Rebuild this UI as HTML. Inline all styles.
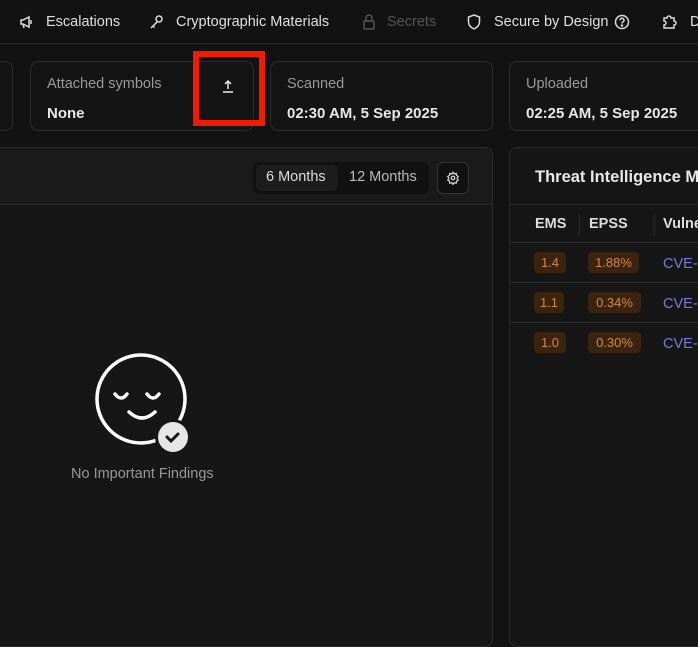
<!DOCTYPE html>
<html><head><style>
*{box-sizing:border-box;margin:0;padding:0}
body{width:698px;height:634px;overflow:hidden;background:#121212;font-family:"Liberation Sans",sans-serif;color:#e6e6e6;position:relative}
.nav{position:absolute;top:0;left:0;width:698px;height:44px;border-bottom:1px solid #2a2a2a}
.nav span{position:absolute;top:14px;font-size:14.5px;color:#e0e0e0;white-space:nowrap}
.nav svg{position:absolute;top:14px}
.card{position:absolute;top:61px;height:70px;border:1px solid #2c2c2c;border-radius:8px;background:#141414}
.card .l{position:absolute;left:16px;top:14px;font-size:14.5px;color:#9a9a9a}
.card .v{position:absolute;left:16px;top:43px;font-size:15px;font-weight:bold;color:#e8e8e8;white-space:nowrap}
.panel{position:absolute;top:147px;height:500px;border:1px solid #2a2a2a;border-radius:8px;background:#161616;overflow:hidden}
.ph{position:absolute;left:0;right:0;top:0;height:57px;background:#1a1a1a;border-bottom:1px solid #2a2a2a}
.badge{position:absolute;height:21px;border-radius:4px;background:#3a2410;color:#d4893a;font-size:13px;line-height:21px;text-align:center}
.cve{position:absolute;left:153px;color:#7b78d8;font-size:14.5px}
.row{position:absolute;left:0;right:0;height:1px;background:#2a2a2a}
</style></head><body>
<div class="nav">
<svg style="left:19px" width="16" height="16" viewBox="0 0 16 16" fill="none" stroke="#ddd" stroke-width="1.5"><path d="M2 6v4h2l6 3V3L4 6z M4 10l1 4"/><path d="M12 6v4"/></svg>
<span style="left:46px">Escalations</span>
<svg style="left:149px" width="16" height="16" viewBox="0 0 16 16" fill="none" stroke="#ddd" stroke-width="1.5"><circle cx="10" cy="5" r="3"/><path d="M8 8l-6 6M4 12l1.5 1.5"/></svg>
<span style="left:176px">Cryptographic Materials</span>
<svg style="left:362px" width="14" height="16" viewBox="0 0 14 16" fill="none" stroke="#555" stroke-width="1.5"><rect x="2" y="7" width="10" height="8" rx="1"/><path d="M4 7V4a3 3 0 0 1 6 0v3"/></svg>
<span style="left:387px;color:#555">Secrets</span>
<svg style="left:467px" width="14" height="16" viewBox="0 0 14 16" fill="none" stroke="#ddd" stroke-width="1.5"><path d="M7 1l5.5 2v5c0 3-2.5 5.5-5.5 7C4 13.5 1.5 11 1.5 8V3z"/></svg>
<span style="left:494px">Secure by Design</span>
<svg style="left:614px" width="16" height="16" viewBox="0 0 16 16" fill="none" stroke="#ddd" stroke-width="1.5"><circle cx="8" cy="8" r="6.5"/><path d="M6 6.2a2 2 0 1 1 2.5 2c-.5.2-.5.6-.5 1.3"/><circle cx="8" cy="11.5" r=".5" fill="#ddd"/></svg>
<svg style="left:661px" width="16" height="16" viewBox="0 0 16 16" fill="none" stroke="#ddd" stroke-width="1.5"><path d="M3 4h3a2 2 0 0 1 4 0h3v3a2 2 0 0 1 0 4v3H3v-3a2 2 0 0 0 0-4z"/></svg>
<span style="left:690px">D</span>
</div>
<div class="card" style="left:-20px;width:33px"></div>
<div class="card" style="left:30px;width:224px"><div class="l">Attached symbols</div><div class="v">None</div>
<svg style="position:absolute;left:191px;top:17px" width="12" height="14" viewBox="0 0 12 14" fill="none" stroke="#eee" stroke-width="1.5"><path d="M6 10V2M3 5l3-3 3 3M1 13h10"/></svg></div>
<div style="position:absolute;left:193px;top:51px;width:72px;height:75px;border:6px solid #f01c00"></div>
<div class="card" style="left:270px;width:223px"><div class="l">Scanned</div><div class="v">02:30 AM, 5 Sep 2025</div></div>
<div class="card" style="left:509px;width:220px"><div class="l">Uploaded</div><div class="v">02:25 AM, 5 Sep 2025</div></div>

<div class="panel" style="left:-20px;width:513px">
<div class="ph">
<div style="position:absolute;left:272px;top:14px;width:176px;height:32px;border-radius:6px;background:#111"></div>
<div style="position:absolute;left:275px;top:17px;width:82px;height:26px;border-radius:5px;background:#1d1d1d"></div>
<div style="position:absolute;left:285px;top:21px;font-size:14.5px;color:#ddd">6 Months</div>
<div style="position:absolute;left:368px;top:21px;font-size:14.5px;color:#bbb">12 Months</div>
<div style="position:absolute;left:456px;top:14px;width:32px;height:32px;border-radius:6px;border:1px solid #333;background:#111"></div>
<svg style="position:absolute;left:465px;top:23px" width="14" height="14" viewBox="0 0 24 24" fill="none" stroke="#ddd" stroke-width="2"><circle cx="12" cy="12" r="3"/><path d="M12 2l2 3 3.5-1 .5 3.5 3 2-2 3 2 3-3 2-.5 3.5-3.5-1-2 3-2-3-3.5 1-.5-3.5-3-2 2-3-2-3 3-2 .5-3.5 3.5 1z"/></svg>
</div>
<div style="position:absolute;left:90px;top:318px;font-size:14.5px;color:#999">No Important Findings</div>
</div>
<svg style="position:absolute;left:90px;top:348px" width="110" height="110" viewBox="0 0 110 110" fill="none" stroke="#fff" stroke-width="3.5" stroke-linecap="round"><circle cx="51" cy="51" r="44"/><path d="M25 46q6 8 12 0M57 46q6 8 12 0M39 64q13 12 26 0"/><circle cx="83" cy="89" r="18" fill="#161616" stroke="none"/><circle cx="83" cy="89" r="15" fill="#e6e6e6" stroke="none"/><path d="M77 89l4 4 7-7" stroke="#161616" stroke-width="3"/></svg>

<div class="panel" style="left:509px;width:220px">
<div class="ph" style="background:#161616"><div style="position:absolute;left:25px;top:20px;font-size:16.5px;font-weight:bold;color:#e8e8e8;white-space:nowrap">Threat Intelligence Mo</div></div>
<div style="position:absolute;top:68px;left:25px;font-size:14.5px;font-weight:bold;color:#ddd">EMS</div>
<div style="position:absolute;top:66px;left:69px;width:1px;height:22px;background:#2a2a2a"></div>
<div style="position:absolute;top:68px;left:79px;font-size:14.5px;font-weight:bold;color:#ddd">EPSS</div>
<div style="position:absolute;top:66px;left:144px;width:1px;height:22px;background:#2a2a2a"></div>
<div style="position:absolute;top:68px;left:153px;font-size:14.5px;font-weight:bold;color:#ddd">Vulne</div>
<div class="row" style="top:94px"></div>
<div class="badge" style="left:24px;top:104px;width:32px">1.4</div><div class="badge" style="left:78px;top:104px;width:51px">1.88%</div><div class="cve" style="top:108px">CVE-</div>
<div class="row" style="top:134px"></div>
<div class="badge" style="left:24px;top:144px;width:30px">1.1</div><div class="badge" style="left:78px;top:144px;width:53px">0.34%</div><div class="cve" style="top:148px">CVE-</div>
<div class="row" style="top:174px"></div>
<div class="badge" style="left:24px;top:184px;width:32px">1.0</div><div class="badge" style="left:78px;top:184px;width:53px">0.30%</div><div class="cve" style="top:188px">CVE-</div>
</div>
</body></html>
